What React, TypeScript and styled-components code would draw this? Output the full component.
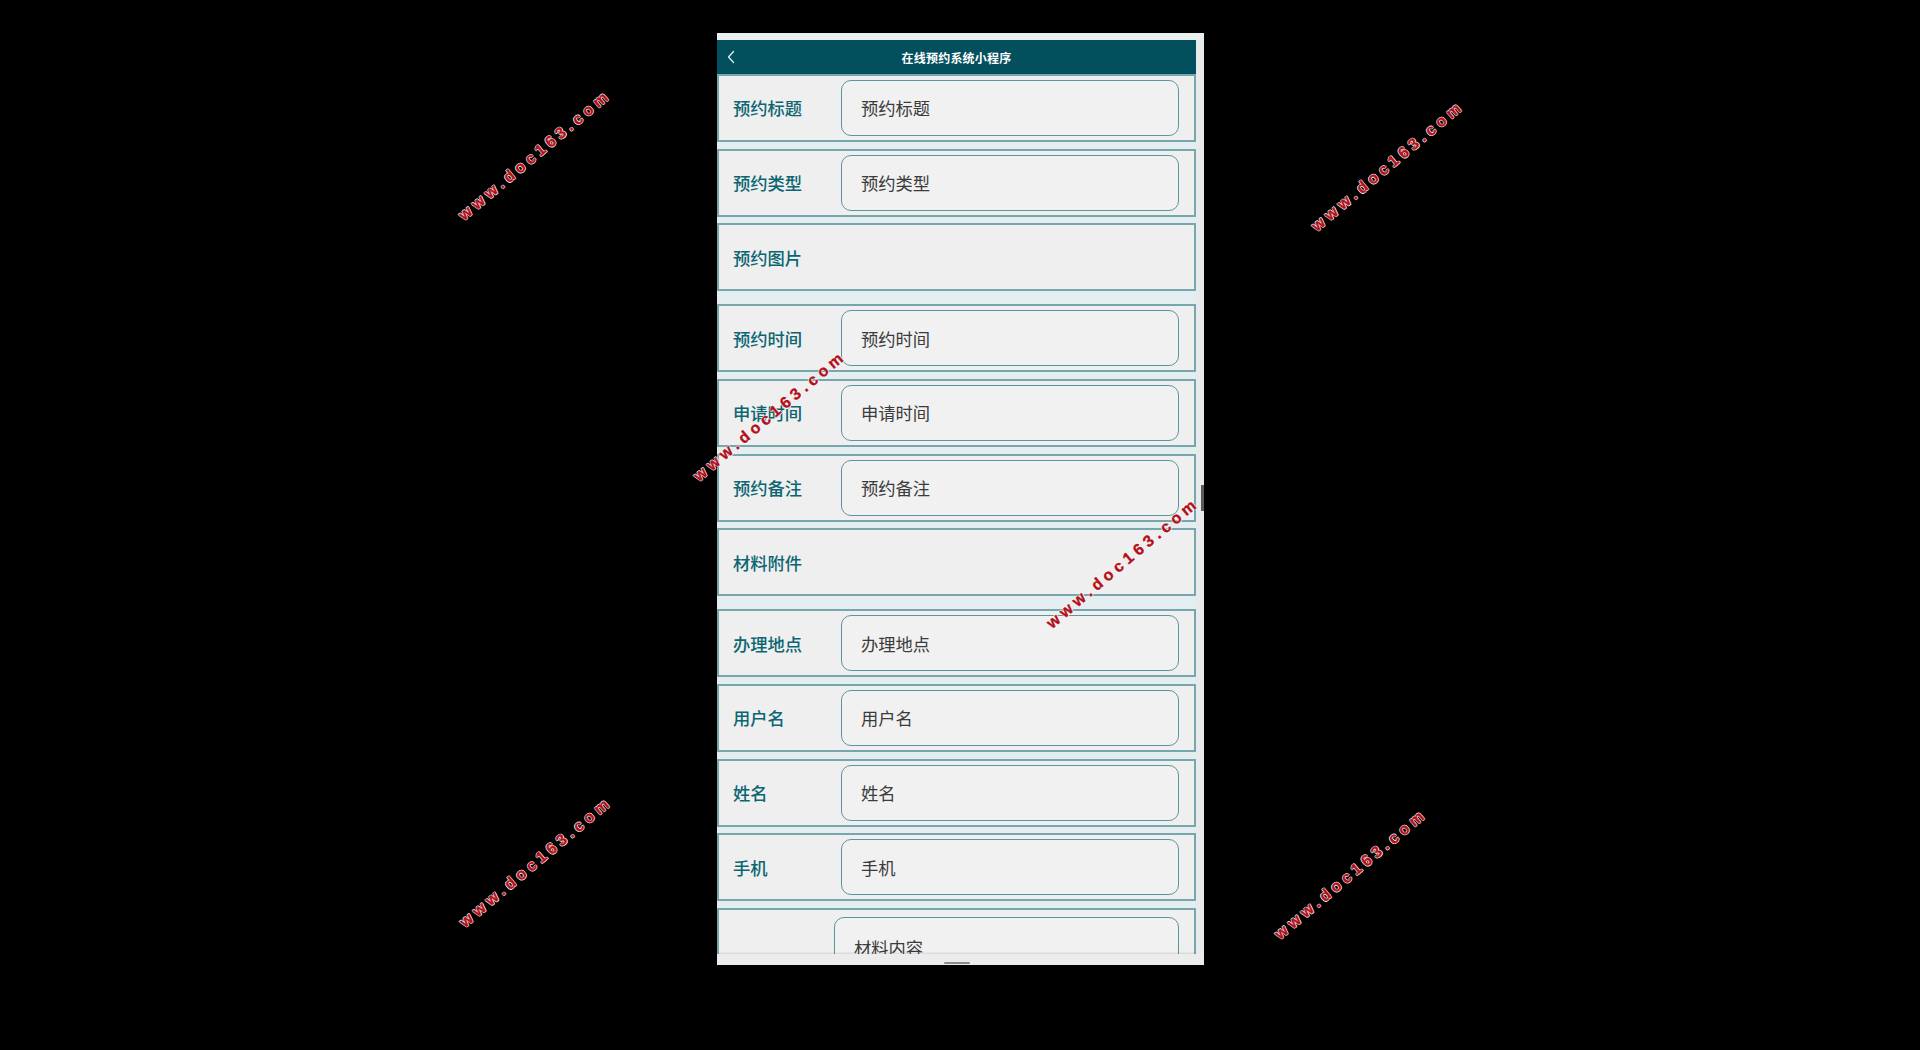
import React from "react";
import styled, { createGlobalStyle } from "styled-components";

const GlobalStyle = createGlobalStyle`
  html, body {
    margin: 0;
    padding: 0;
    background: #000;
    font-family: "Noto Sans CJK SC", "Noto Sans", sans-serif;
  }
  * { box-sizing: border-box; }
`;

const Page = styled.div`
  position: relative;
  width: 1920px;
  height: 1050px;
  background: #000;
  overflow: hidden;
  display: flex;
  justify-content: center;
  padding-top: 33px;
`;

const Phone = styled.div`
  width: 487px;
  height: 932px;
  margin-left: 1px;
  background: #ebeded;
  display: flex;
  flex-direction: column;
`;

const TopStrip = styled.div`
  height: 7px;
  flex: none;
  background: #e9eeef;
`;

const Body = styled.div`
  flex: 1;
  display: flex;
  min-height: 0;
`;

const Main = styled.div`
  width: 479px;
  display: flex;
  flex-direction: column;
  min-height: 0;
`;

const Header = styled.div`
  height: 34px;
  flex: none;
  background: #02505d;
  display: flex;
  align-items: center;
  justify-content: center;
  position: relative;
  color: #fff;
  font-size: 12px;
  font-weight: 700;
  letter-spacing: 0.2px;
`;

const BackIcon = styled.svg`
  position: absolute;
  left: 9px;
  top: 10px;
  width: 10px;
  height: 14px;
`;

const Content = styled.div`
  flex: 1;
  overflow: hidden;
  background: #e4eef0;
  display: flex;
  flex-direction: column;
  gap: 6.7px;
`;

const Row = styled.div<{ $media?: boolean; $tall?: boolean }>`
  flex: none;
  height: ${(p) => (p.$tall ? "120px" : "68px")};
  margin-bottom: ${(p) => (p.$media ? "6.3px" : "0")};
  background: #efefef;
  border: 2px solid #78a6ad;
  display: flex;
  align-items: ${(p) => (p.$tall ? "flex-start" : "center")};
  padding: ${(p) => (p.$tall ? "7px 15px 0 0" : "0 15px 0 14px")};
`;

const Label = styled.div`
  width: 108px;
  flex: none;
  color: #0b6672;
  font-size: 17.3px;
  font-weight: 500;
  line-height: 1;
`;

const Input = styled.div`
  flex: 1;
  height: 56px;
  border: 1px solid #5b959e;
  border-radius: 10px;
  background: #f1f1f1;
  display: flex;
  align-items: center;
  padding-left: 19px;
  color: #3b3b3b;
  font-size: 17.3px;
  line-height: 1;
`;

const TextArea = styled.div`
  margin-left: 115px;
  flex: 1;
  height: 120px;
  border: 1px solid #5b959e;
  border-radius: 10px;
  background: #f1f1f1;
  padding: 21px 0 0 19px;
  color: #3b3b3b;
  font-size: 17.3px;
  line-height: 1;
`;

const ScrollTrack = styled.div`
  width: 8px;
  flex: none;
  position: relative;
  background: #e8ebeb;
`;

const Thumb = styled.div`
  position: absolute;
  right: 0;
  top: 445px;
  width: 3px;
  height: 26px;
  background: #5a5a5a;
`;

const BottomBar = styled.div`
  height: 11px;
  flex: none;
  background: #ececec;
  box-shadow: 0 -1px 2px rgba(0, 0, 0, 0.12);
  display: flex;
  justify-content: center;
  padding-top: 8px;
  padding-right: 8px;
`;

const Handle = styled.div`
  width: 26px;
  height: 2px;
  border-radius: 1px;
  background: #8a8a8a;
`;

const Watermark = styled.div<{ $x: number; $y: number }>`
  position: absolute;
  left: ${(p) => p.$x}px;
  top: ${(p) => p.$y}px;
  transform: translate(-50%, -50%) rotate(-40deg);
  white-space: nowrap;
  font-family: "Liberation Sans", Arial, sans-serif;
  font-weight: 700;
  font-size: 16px;
  letter-spacing: 4.3px;
  color: #b3101b;
  -webkit-text-stroke: 0.4px #b3101b;
  text-shadow: 0.6px 0.6px 0 #fff, -0.6px -0.6px 0 #fff, 0.6px -0.6px 0 #fff,
    -0.6px 0.6px 0 #fff;
  pointer-events: none;
`;

type Field = { label: string; placeholder?: string; media?: boolean };

const fields: Field[] = [
  { label: "预约标题", placeholder: "预约标题" },
  { label: "预约类型", placeholder: "预约类型" },
  { label: "预约图片", media: true },
  { label: "预约时间", placeholder: "预约时间" },
  { label: "申请时间", placeholder: "申请时间" },
  { label: "预约备注", placeholder: "预约备注" },
  { label: "材料附件", media: true },
  { label: "办理地点", placeholder: "办理地点" },
  { label: "用户名", placeholder: "用户名" },
  { label: "姓名", placeholder: "姓名" },
  { label: "手机", placeholder: "手机" },
];

const marks = [
  { x: 535, y: 155 },
  { x: 1388, y: 166 },
  { x: 770, y: 416 },
  { x: 1123, y: 563 },
  { x: 536, y: 862 },
  { x: 1351, y: 874 },
];

export default function App() {
  return (
    <>
      <GlobalStyle />
      <Page>
        <Phone>
          <TopStrip />
          <Body>
            <Main>
              <Header>
                <BackIcon viewBox="0 0 10 14">
                  <path
                    d="M7.5 1.5 L2.5 7 L7.5 12.5"
                    fill="none"
                    stroke="#d8f0f2"
                    strokeWidth="1.3"
                    strokeLinecap="round"
                    strokeLinejoin="round"
                  />
                </BackIcon>
                在线预约系统小程序
              </Header>
              <Content>
                {fields.map((f) => (
                  <Row key={f.label} $media={f.media}>
                    <Label>{f.label}</Label>
                    {f.placeholder && <Input>{f.placeholder}</Input>}
                  </Row>
                ))}
                <Row $tall>
                  <TextArea>材料内容</TextArea>
                </Row>
              </Content>
            </Main>
            <ScrollTrack>
              <Thumb />
            </ScrollTrack>
          </Body>
          <BottomBar>
            <Handle />
          </BottomBar>
        </Phone>
        {marks.map((m, i) => (
          <Watermark key={i} $x={m.x} $y={m.y}>
            www.doc163.com
          </Watermark>
        ))}
      </Page>
    </>
  );
}
